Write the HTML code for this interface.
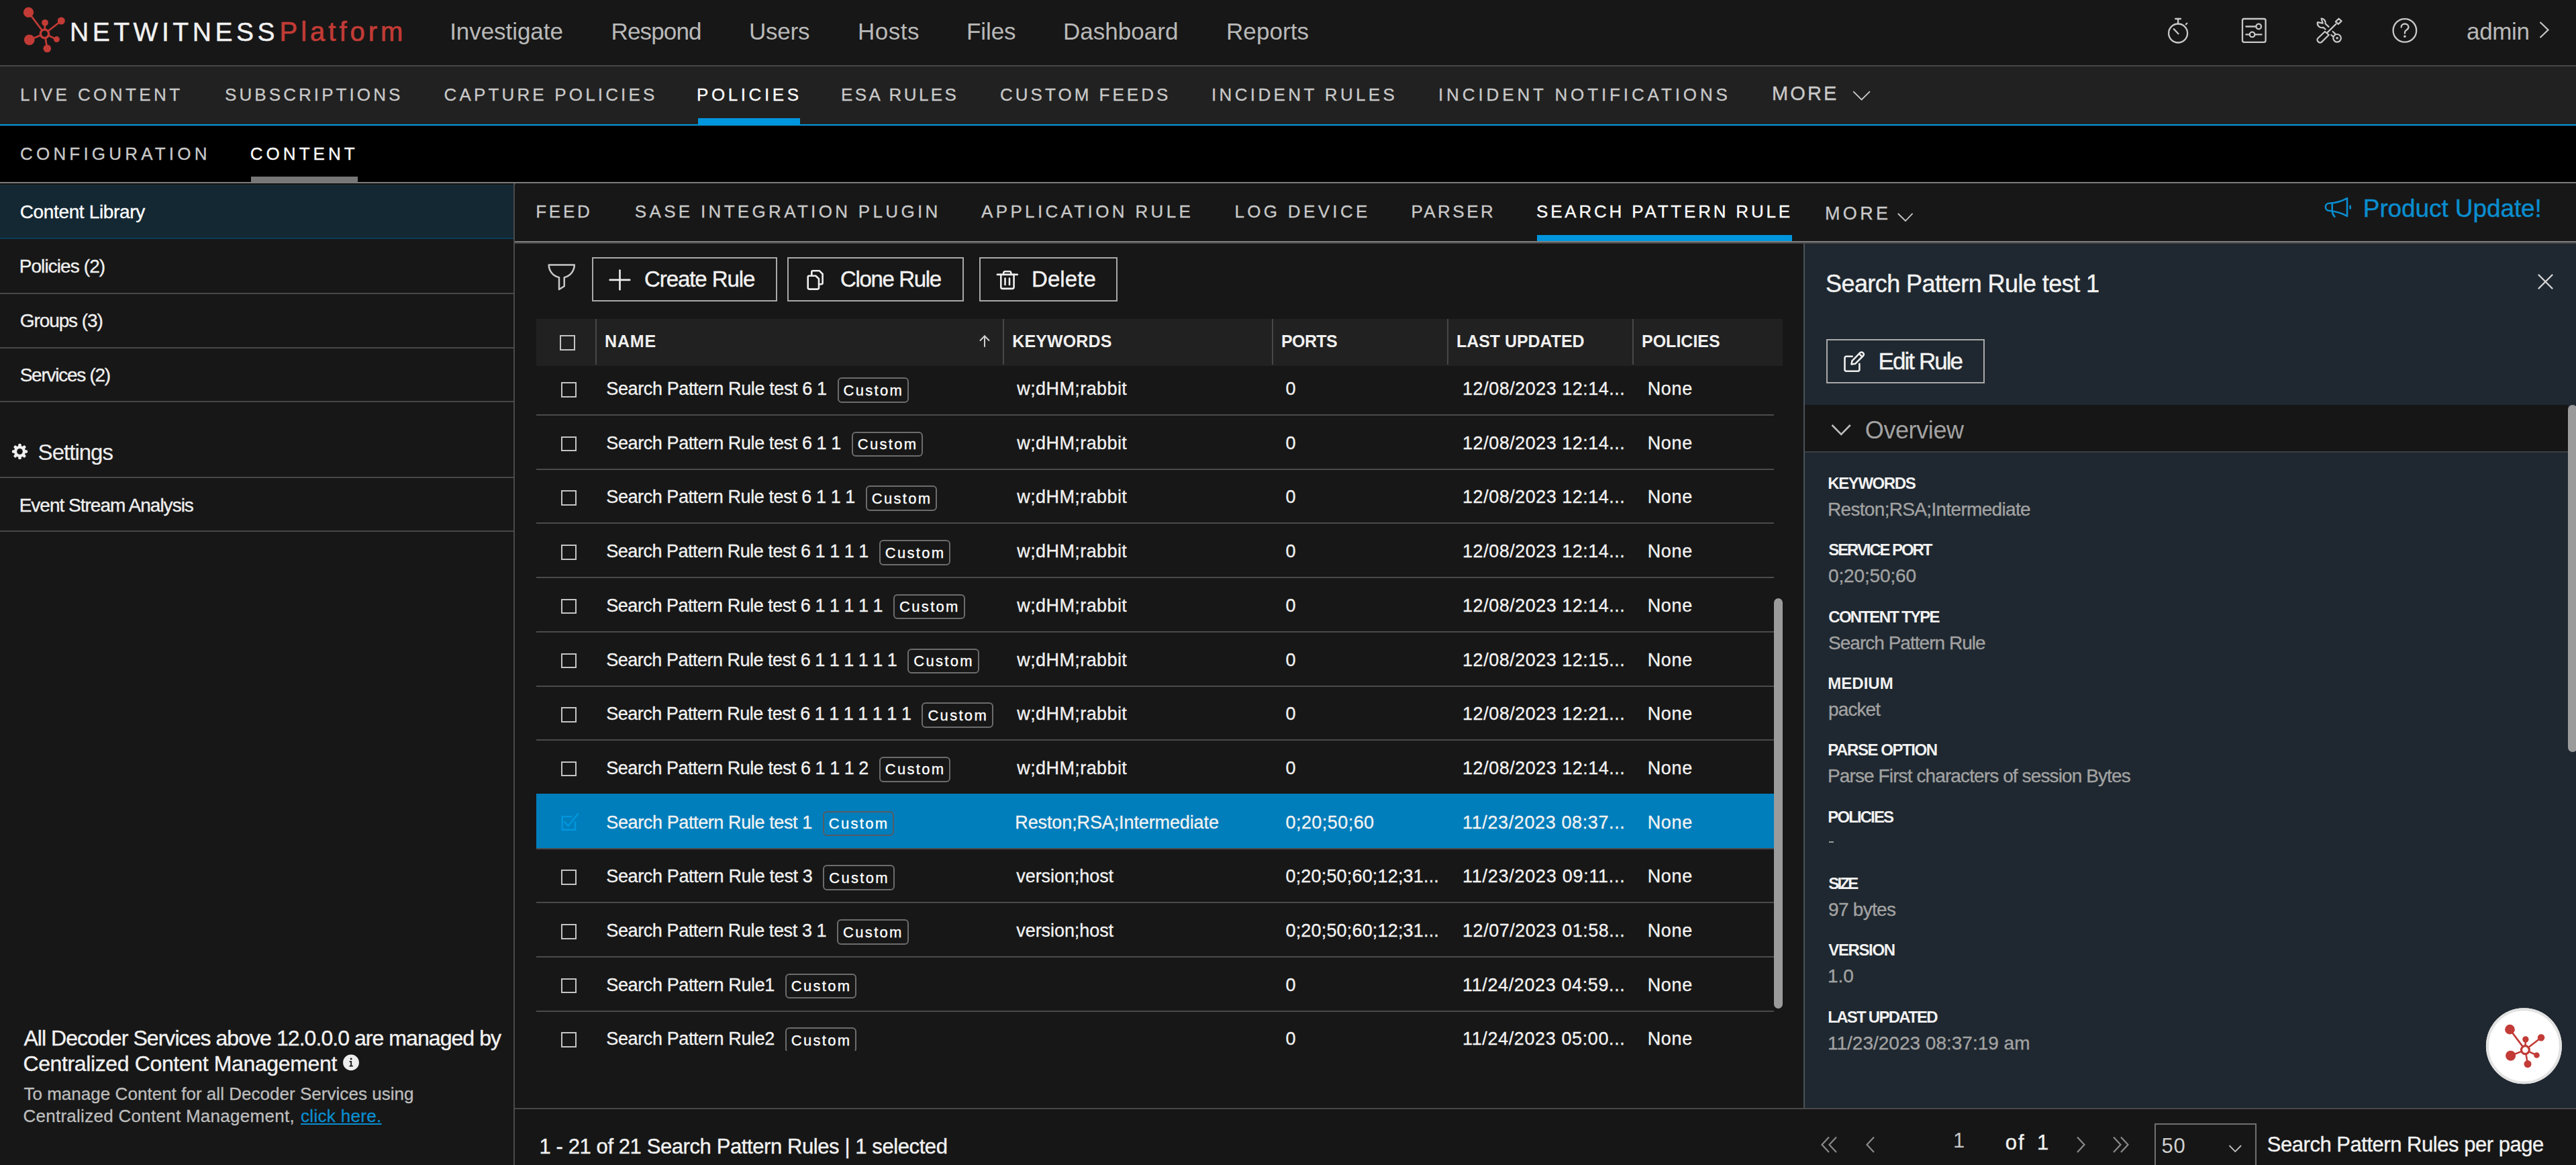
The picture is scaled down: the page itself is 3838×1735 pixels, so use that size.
<!DOCTYPE html>
<html><head><meta charset="utf-8"><title>NetWitness Platform</title>
<style>
html,body{margin:0;padding:0;width:3838px;height:1735px;overflow:hidden;background:#171717;}
body{position:relative;font-family:"Liberation Sans",sans-serif;}
.a{position:absolute;box-sizing:border-box;}
.t{position:absolute;white-space:nowrap;line-height:1;font-family:"Liberation Sans",sans-serif;}
svg.a{overflow:visible;}
</style></head><body>
<div class="a" style="left:0px;top:0px;width:3838px;height:97px;background:#171717;"></div>
<div class="a" style="left:0px;top:97px;width:3838px;height:2px;background:#474747;"></div>
<svg class="a" style="left:0px;top:0px;" width="110" height="97" viewBox="0 0 110 97"><line x1="66.5" y1="50.3" x2="42.50" y2="18.40" stroke="#c23b36" stroke-width="2.70"/><line x1="66.5" y1="50.3" x2="91.30" y2="31.00" stroke="#c23b36" stroke-width="2.70"/><line x1="66.5" y1="50.3" x2="67.00" y2="33.80" stroke="#c23b36" stroke-width="2.70"/><line x1="66.5" y1="50.3" x2="43.70" y2="59.30" stroke="#c23b36" stroke-width="2.70"/><line x1="66.5" y1="50.3" x2="84.40" y2="58.60" stroke="#c23b36" stroke-width="2.70"/><line x1="66.5" y1="50.3" x2="70.30" y2="72.30" stroke="#c23b36" stroke-width="2.70"/><circle cx="42.50" cy="18.40" r="7.70" fill="#c23b36"/><circle cx="91.30" cy="31.00" r="5.50" fill="#c23b36"/><circle cx="67.00" cy="33.80" r="4.90" fill="#c23b36"/><circle cx="43.70" cy="59.30" r="7.90" fill="#c23b36"/><circle cx="84.40" cy="58.60" r="4.50" fill="#c23b36"/><circle cx="70.30" cy="72.30" r="5.80" fill="#c23b36"/><circle cx="66.5" cy="50.3" r="6.20" fill="#171717" stroke="#c23b36" stroke-width="3.40"/></svg>
<div class="t" style="left:104.00px;top:28px;font-size:39px;color:#f2f2f2;letter-spacing:5.538px;-webkit-text-stroke:0.47px #f2f2f2;">NETWITNESS</div>
<div class="t" style="left:416.60px;top:27px;font-size:40px;color:#c23b36;letter-spacing:4.971px;-webkit-text-stroke:0.7px #c23b36;">Platform</div>
<div class="t" style="left:670.20px;top:29px;font-size:35px;color:#b9b9b9;letter-spacing:-0.061px;">Investigate</div>
<div class="t" style="left:910.50px;top:29px;font-size:35px;color:#b9b9b9;letter-spacing:-0.856px;">Respond</div>
<div class="t" style="left:1116.00px;top:29px;font-size:35px;color:#b9b9b9;letter-spacing:-0.224px;">Users</div>
<div class="t" style="left:1278.00px;top:29px;font-size:35px;color:#b9b9b9;letter-spacing:0.509px;">Hosts</div>
<div class="t" style="left:1440.00px;top:29px;font-size:35px;color:#b9b9b9;letter-spacing:-0.099px;">Files</div>
<div class="t" style="left:1584.00px;top:29px;font-size:35px;color:#b9b9b9;letter-spacing:0.030px;">Dashboard</div>
<div class="t" style="left:1827.00px;top:29px;font-size:35px;color:#b9b9b9;letter-spacing:0.075px;">Reports</div>
<svg class="a" style="left:3220px;top:20px;" width="60" height="50" viewBox="0 0 60 50"><g fill="none" stroke="#c8c8c8" stroke-width="2.3" stroke-linecap="round"><circle cx="25.1" cy="29.5" r="14"/><line x1="21.2" y1="8" x2="29" y2="8"/><line x1="25.1" y1="8" x2="25.1" y2="15.5"/><line x1="36.9" y1="16.2" x2="38.3" y2="14.8"/><line x1="18.8" y1="23.3" x2="25.5" y2="30.3"/></g></svg>
<svg class="a" style="left:3330px;top:20px;" width="60" height="50" viewBox="0 0 60 50"><g fill="none" stroke="#c8c8c8" stroke-width="2.3" stroke-linecap="round"><rect x="11" y="8" width="34.6" height="34.8" rx="2.5"/><line x1="16.4" y1="19.5" x2="31.4" y2="19.5"/><circle cx="35.2" cy="19.5" r="3.8"/><line x1="16.4" y1="31.4" x2="21.7" y2="31.4"/><line x1="29.5" y1="31.4" x2="39.5" y2="31.4"/><circle cx="25.6" cy="31.4" r="3.8"/></g></svg>
<svg class="a" style="left:3445px;top:20px;" width="60" height="50" viewBox="0 0 60 50"><g fill="none" stroke="#c8c8c8" stroke-width="2.2" stroke-linecap="round" stroke-linejoin="round"><path d="M18.9 27 L24.8 32 L14 42.6 A3.2 3.2 0 0 1 9.5 42.6 L8.4 41.5 A3.2 3.2 0 0 1 8.4 37 Z"/><line x1="22.3" y1="28.6" x2="35.3" y2="15.9"/><path d="M34.9 12.4 L39.6 7.7 L43.6 11.4 L38.8 15.9 Z"/><path d="M24.5 19.9 L19.6 15.2 A6.4 6.4 0 0 0 13.6 7.5 L15.7 14.7 L8 13.2 A6.4 6.4 0 0 0 16.4 20.8 L19.6 23.5"/><circle cx="37.1" cy="36.8" r="5.8"/><line x1="30.6" y1="27" x2="34.3" y2="30.4"/><line x1="28.3" y1="32" x2="31.4" y2="34.6"/></g><circle cx="37.1" cy="36.8" r="1.8" fill="#c8c8c8"/></svg>
<svg class="a" style="left:3555px;top:20px;" width="60" height="50" viewBox="0 0 60 50"><g fill="none" stroke="#c8c8c8" stroke-width="2.3" stroke-linecap="round"><circle cx="27.9" cy="25.4" r="17.3"/><path d="M22.6 20.5 C22.6 17.5 25 15.5 27.9 15.5 C31 15.5 33.5 17.5 33.5 20.3 C33.5 23.5 30.5 24.5 28.8 26 C28 26.8 27.9 27.8 27.9 29.7"/></g><circle cx="27.9" cy="34.3" r="1.8" fill="#c8c8c8"/></svg>
<div class="t" style="left:3675.00px;top:29px;font-size:35px;color:#b9b9b9;letter-spacing:-0.340px;">admin</div>
<svg class="a" style="left:3780px;top:28px;" width="24" height="32" viewBox="0 0 24 32"><polyline points="4.5,5 16.5,16.5 4.5,28" fill="none" stroke="#c4c4c4" stroke-width="2.3"/></svg>
<div class="a" style="left:0px;top:99px;width:3838px;height:86px;background:#212121;"></div>
<div class="a" style="left:0px;top:185px;width:3838px;height:2px;background:#0096dd;"></div>
<div class="t" style="left:30.10px;top:128px;font-size:26px;color:#c9c9c9;letter-spacing:4.439px;-webkit-text-stroke:0.31px #c9c9c9;">LIVE CONTENT</div>
<div class="t" style="left:335.00px;top:128px;font-size:26px;color:#c9c9c9;letter-spacing:4.081px;-webkit-text-stroke:0.31px #c9c9c9;">SUBSCRIPTIONS</div>
<div class="t" style="left:661.50px;top:128px;font-size:26px;color:#c9c9c9;letter-spacing:4.163px;-webkit-text-stroke:0.31px #c9c9c9;">CAPTURE POLICIES</div>
<div class="t" style="left:1038.00px;top:128px;font-size:26px;color:#ffffff;letter-spacing:4.587px;-webkit-text-stroke:0.31px #ffffff;">POLICIES</div>
<div class="t" style="left:1253.00px;top:128px;font-size:26px;color:#c9c9c9;letter-spacing:3.425px;-webkit-text-stroke:0.31px #c9c9c9;">ESA RULES</div>
<div class="t" style="left:1490.00px;top:128px;font-size:26px;color:#c9c9c9;letter-spacing:4.022px;-webkit-text-stroke:0.31px #c9c9c9;">CUSTOM FEEDS</div>
<div class="t" style="left:1805.00px;top:128px;font-size:26px;color:#c9c9c9;letter-spacing:4.357px;-webkit-text-stroke:0.31px #c9c9c9;">INCIDENT RULES</div>
<div class="t" style="left:2143.00px;top:128px;font-size:26px;color:#c9c9c9;letter-spacing:4.881px;-webkit-text-stroke:0.31px #c9c9c9;">INCIDENT NOTIFICATIONS</div>
<div class="a" style="left:1040px;top:176px;width:152px;height:10px;background:#0096dd;"></div>
<div class="t" style="left:2639.90px;top:125px;font-size:29px;color:#c9c9c9;letter-spacing:3.148px;-webkit-text-stroke:0.35px #c9c9c9;">MORE</div>
<svg class="a" style="left:2755px;top:130px;" width="36" height="24" viewBox="0 0 36 24"><polyline points="6.2,6.2 18.6,18.4 31,6.2" fill="none" stroke="#c9c9c9" stroke-width="1.8"/></svg>
<div class="a" style="left:0px;top:187.5px;width:3838px;height:84px;background:#000000;"></div>
<div class="t" style="left:30.00px;top:215.6px;font-size:26px;color:#c9c9c9;letter-spacing:5.192px;-webkit-text-stroke:0.31px #c9c9c9;">CONFIGURATION</div>
<div class="t" style="left:372.80px;top:215.6px;font-size:26px;color:#ffffff;letter-spacing:5.021px;-webkit-text-stroke:0.31px #ffffff;">CONTENT</div>
<div class="a" style="left:374px;top:263px;width:159px;height:8px;background:#777777;"></div>
<div class="a" style="left:0px;top:271px;width:3838px;height:2px;background:#7c7c7c;"></div>
<div class="a" style="left:0px;top:273px;width:3838px;height:2px;background:#444444;"></div>
<div class="a" style="left:0px;top:273px;width:766px;height:1462px;background:#171717;"></div>
<div class="a" style="left:765px;top:273px;width:2px;height:1462px;background:#4a4a4a;"></div>
<div class="a" style="left:0px;top:275px;width:765px;height:80px;background:#142833;"></div>
<div class="a" style="left:0px;top:354px;width:765px;height:2px;background:#0b3d57;"></div>
<div class="a" style="left:0px;top:435.5px;width:765px;height:2px;background:#474747;"></div>
<div class="a" style="left:0px;top:516.7px;width:765px;height:2px;background:#474747;"></div>
<div class="a" style="left:0px;top:597.1px;width:765px;height:2px;background:#474747;"></div>
<div class="a" style="left:0px;top:710.2px;width:765px;height:2px;background:#474747;"></div>
<div class="a" style="left:0px;top:789.6px;width:765px;height:2px;background:#474747;"></div>
<div class="t" style="left:29.70px;top:302px;font-size:28px;color:#ffffff;letter-spacing:-0.352px;-webkit-text-stroke:0.34px #ffffff;">Content Library</div>
<div class="t" style="left:28.70px;top:383.3px;font-size:28px;color:#f0f0f0;letter-spacing:-0.914px;-webkit-text-stroke:0.34px #f0f0f0;">Policies (2)</div>
<div class="t" style="left:29.70px;top:464px;font-size:28px;color:#f0f0f0;letter-spacing:-1.077px;-webkit-text-stroke:0.34px #f0f0f0;">Groups (3)</div>
<div class="t" style="left:29.70px;top:545.3px;font-size:28px;color:#f0f0f0;letter-spacing:-1.267px;-webkit-text-stroke:0.34px #f0f0f0;">Services (2)</div>
<div class="t" style="left:56.60px;top:657px;font-size:33px;color:#ededed;letter-spacing:-0.977px;-webkit-text-stroke:0.15px #ededed;">Settings</div>
<svg class="a" style="left:10px;top:655px;" width="40" height="36" viewBox="0 0 40 36"><circle cx="19.5" cy="17.4" r="8.6" fill="#f0f0f0"/><rect x="17.25" y="5.8" width="4.5" height="6" rx="1.6" fill="#f0f0f0" transform="rotate(0 19.5 17.4)"/><rect x="17.25" y="5.8" width="4.5" height="6" rx="1.6" fill="#f0f0f0" transform="rotate(45 19.5 17.4)"/><rect x="17.25" y="5.8" width="4.5" height="6" rx="1.6" fill="#f0f0f0" transform="rotate(90 19.5 17.4)"/><rect x="17.25" y="5.8" width="4.5" height="6" rx="1.6" fill="#f0f0f0" transform="rotate(135 19.5 17.4)"/><rect x="17.25" y="5.8" width="4.5" height="6" rx="1.6" fill="#f0f0f0" transform="rotate(180 19.5 17.4)"/><rect x="17.25" y="5.8" width="4.5" height="6" rx="1.6" fill="#f0f0f0" transform="rotate(225 19.5 17.4)"/><rect x="17.25" y="5.8" width="4.5" height="6" rx="1.6" fill="#f0f0f0" transform="rotate(270 19.5 17.4)"/><rect x="17.25" y="5.8" width="4.5" height="6" rx="1.6" fill="#f0f0f0" transform="rotate(315 19.5 17.4)"/><circle cx="19.5" cy="17.4" r="4.3" fill="#171717"/></svg>
<div class="t" style="left:28.70px;top:739px;font-size:28px;color:#f0f0f0;letter-spacing:-0.998px;-webkit-text-stroke:0.34px #f0f0f0;">Event Stream Analysis</div>
<div class="t" style="left:35.40px;top:1529.6px;font-size:32px;color:#f2f2f2;letter-spacing:-0.942px;-webkit-text-stroke:0.38px #f2f2f2;">All Decoder Services above 12.0.0.0 are managed by</div>
<div class="t" style="left:34.40px;top:1567.5px;font-size:32px;color:#f2f2f2;letter-spacing:-0.366px;-webkit-text-stroke:0.38px #f2f2f2;">Centralized Content Management</div>
<svg class="a" style="left:505px;top:1565px;" width="36" height="36" viewBox="0 0 36 36"><circle cx="18" cy="17.4" r="11.9" fill="#ededed"/><rect x="17.2" y="15.4" width="1.9" height="7.4" fill="#171717"/><rect x="15.6" y="15.2" width="3.4" height="1.7" fill="#171717"/><rect x="15.6" y="21.7" width="5.2" height="1.8" fill="#171717"/><circle cx="18.1" cy="12" r="1.45" fill="#171717"/></svg>
<div class="t" style="left:35.40px;top:1615.8px;font-size:26px;color:#bdbdbd;letter-spacing:0.033px;-webkit-text-stroke:0.31px #bdbdbd;">To manage Content for all Decoder Services using</div>
<div class="t" style="left:34.40px;top:1649px;font-size:26px;color:#bdbdbd;letter-spacing:0.274px;-webkit-text-stroke:0.31px #bdbdbd;">Centralized Content Management,</div>
<div class="t" style="left:448.00px;top:1649px;font-size:26px;color:#0a8dcf;letter-spacing:0.319px;text-decoration:underline;text-underline-offset:2px;text-decoration-thickness:2px;-webkit-text-stroke:0.31px #0a8dcf;">click here.</div>
<div class="a" style="left:768px;top:273px;width:3070px;height:87px;background:#171717;"></div>
<div class="a" style="left:767px;top:359px;width:3071px;height:2px;background:#7e7e7e;"></div>
<div class="a" style="left:767px;top:361px;width:3071px;height:2px;background:#444444;"></div>
<div class="t" style="left:798.20px;top:302px;font-size:26px;color:#c9c9c9;letter-spacing:3.745px;-webkit-text-stroke:0.31px #c9c9c9;">FEED</div>
<div class="t" style="left:945.80px;top:302px;font-size:26px;color:#c9c9c9;letter-spacing:4.324px;-webkit-text-stroke:0.31px #c9c9c9;">SASE INTEGRATION PLUGIN</div>
<div class="t" style="left:1462.00px;top:302px;font-size:26px;color:#c9c9c9;letter-spacing:4.351px;-webkit-text-stroke:0.31px #c9c9c9;">APPLICATION RULE</div>
<div class="t" style="left:1839.40px;top:302px;font-size:26px;color:#c9c9c9;letter-spacing:4.334px;-webkit-text-stroke:0.31px #c9c9c9;">LOG DEVICE</div>
<div class="t" style="left:2102.40px;top:302px;font-size:26px;color:#c9c9c9;letter-spacing:3.477px;-webkit-text-stroke:0.31px #c9c9c9;">PARSER</div>
<div class="t" style="left:2289.00px;top:302px;font-size:26px;color:#ffffff;letter-spacing:3.806px;-webkit-text-stroke:0.31px #ffffff;">SEARCH PATTERN RULE</div>
<div class="t" style="left:2719.00px;top:305px;font-size:27px;color:#c9c9c9;letter-spacing:4.336px;-webkit-text-stroke:0.32px #c9c9c9;">MORE</div>
<svg class="a" style="left:2822px;top:310px;" width="34" height="24" viewBox="0 0 34 24"><polyline points="5.8,8 17,19 27.6,7.8" fill="none" stroke="#c9c9c9" stroke-width="1.8"/></svg>
<div class="a" style="left:2290px;top:350px;width:380px;height:9px;background:#0096dd;"></div>
<svg class="a" style="left:3455px;top:285px;" width="60" height="50" viewBox="0 0 60 50"><g fill="none" stroke="#0a8dcf" stroke-width="2.6" stroke-linejoin="round" stroke-linecap="round"><path d="M15 17.8 Q31 16.8 42 10.1 L42 36.9 Q31 30.3 15 28.7 A5.1 5.45 0 0 1 15 17.8Z"/><line x1="19.7" y1="17.6" x2="19.7" y2="28.8"/><path d="M19.7 28.8 Q20.2 34.5 23.4 37.7"/><line x1="46.6" y1="21.7" x2="46.6" y2="25.5"/></g></svg>
<div class="t" style="left:3520.80px;top:292px;font-size:37px;color:#0a8dcf;letter-spacing:-0.093px;-webkit-text-stroke:0.44px #0a8dcf;">Product Update!</div>
<svg class="a" style="left:805px;top:375px;" width="60" height="60" viewBox="0 0 60 60"><path d="M12.7 19.6 L50.8 19.6 C50.8 28 45 36 35.7 38.1 L35.7 51.3 L28 56 L28 38.1 C18.5 36 12.7 28 12.7 19.6Z" fill="none" stroke="#c8c8c8" stroke-width="2.5" stroke-linejoin="round"/></svg>
<div class="a" style="left:882px;top:382.5px;width:276px;height:66px;border:2px solid #a9a9a9;background:none;"></div>
<svg class="a" style="left:900px;top:395px;" width="48" height="45" viewBox="0 0 48 45"><g stroke="#eeeeee" stroke-width="2.6" stroke-linecap="round"><line x1="8.7" y1="21.9" x2="38.2" y2="21.9"/><line x1="23.5" y1="7.5" x2="23.5" y2="36.3"/></g></svg>
<div class="t" style="left:960.00px;top:399px;font-size:33px;color:#f2f2f2;letter-spacing:-1.073px;-webkit-text-stroke:0.40px #f2f2f2;">Create Rule</div>
<div class="a" style="left:1173px;top:382.5px;width:263px;height:66px;border:2px solid #a9a9a9;background:none;"></div>
<svg class="a" style="left:1190px;top:390px;" width="50" height="50" viewBox="0 0 50 50"><g fill="none" stroke="#eeeeee" stroke-width="2.6" stroke-linejoin="round"><path d="M19.3 20.8 V15.3 a2 2 0 0 1 2-2 H30.9 L35.6 18 V31.3 a2 2 0 0 1 -2 2 H30"/><path d="M15.7 20.8 H25.3 L30 25.3 V38.6 a2 2 0 0 1 -2 2 H15.7 a2 2 0 0 1 -2-2 V22.8 a2 2 0 0 1 2-2Z"/></g></svg>
<div class="t" style="left:1252.00px;top:399px;font-size:33px;color:#f2f2f2;letter-spacing:-1.345px;-webkit-text-stroke:0.40px #f2f2f2;">Clone Rule</div>
<div class="a" style="left:1459px;top:382.5px;width:206px;height:66px;border:2px solid #a9a9a9;background:none;"></div>
<svg class="a" style="left:1475px;top:390px;" width="50" height="50" viewBox="0 0 50 50"><g fill="none" stroke="#eeeeee" stroke-width="2.6" stroke-linecap="round" stroke-linejoin="round"><line x1="10.9" y1="18.9" x2="40.8" y2="18.9"/><path d="M20.2 18.9 V16.4 a2.2 2.2 0 0 1 2.2-2.2 H29.1 a2.2 2.2 0 0 1 2.2 2.2 V18.9"/><path d="M16.3 18.9 V37.4 a2.5 2.5 0 0 0 2.5 2.5 H33.1 a2.5 2.5 0 0 0 2.5-2.5 V18.9"/><line x1="22.5" y1="24.5" x2="22.5" y2="33.9"/><line x1="29" y1="24.5" x2="29" y2="33.9"/></g></svg>
<div class="t" style="left:1537.00px;top:399px;font-size:33px;color:#f2f2f2;letter-spacing:0.092px;-webkit-text-stroke:0.40px #f2f2f2;">Delete</div>
<div class="a" style="left:799px;top:475px;width:1857px;height:70px;background:#212121;"></div>
<div class="a" style="left:887px;top:475px;width:2px;height:67.5px;background:#474747;"></div>
<div class="a" style="left:1494px;top:475px;width:2px;height:67.5px;background:#474747;"></div>
<div class="a" style="left:1895px;top:475px;width:2px;height:67.5px;background:#474747;"></div>
<div class="a" style="left:2156px;top:475px;width:2px;height:67.5px;background:#474747;"></div>
<div class="a" style="left:2432px;top:475px;width:2px;height:67.5px;background:#474747;"></div>
<div class="a" style="left:834px;top:499px;width:22.5px;height:22.5px;border:2.8px solid #c4c4c4;"></div>
<div class="t" style="left:901.00px;top:496px;font-size:25px;color:#f0f0f0;font-weight:700;letter-spacing:0.822px;">NAME</div>
<svg class="a" style="left:1452px;top:494px;" width="30" height="28" viewBox="0 0 30 28"><g stroke="#d0d0d0" stroke-width="2" fill="none" stroke-linecap="round"><line x1="15" y1="6.5" x2="15" y2="22"/><polyline points="8.5,13 15,6.5 21.5,13"/></g></svg>
<div class="t" style="left:1508.30px;top:496px;font-size:25px;color:#f0f0f0;font-weight:700;letter-spacing:0.121px;">KEYWORDS</div>
<div class="t" style="left:1909.00px;top:496px;font-size:25px;color:#f0f0f0;font-weight:700;letter-spacing:-0.611px;">PORTS</div>
<div class="t" style="left:2170.00px;top:496px;font-size:25px;color:#f0f0f0;font-weight:700;letter-spacing:-0.059px;">LAST UPDATED</div>
<div class="t" style="left:2446.00px;top:496px;font-size:25px;color:#f0f0f0;font-weight:700;">POLICIES</div>
<div class="a" style="left:0;top:545px;width:3838px;height:1020px;overflow:hidden;">
<div class="a" style="left:0;top:-545px;width:3838px;height:1735px;">
<div class="a" style="left:799px;top:617px;width:1844px;height:2px;background:#4a4a4a;"></div>
<div class="a" style="left:836px;top:569px;width:22.5px;height:22.5px;border:2.8px solid #c4c4c4;"></div>
<div class="t" style="left:903.30px;top:566px;font-size:27px;color:#f2f2f2;letter-spacing:-0.388px;-webkit-text-stroke:0.32px #f2f2f2;">Search Pattern Rule test 6 1</div>
<div class="a" style="left:1247.5px;top:562px;width:106.5px;height:37.7px;border:2px solid #6c6c6c;border-radius:6px;"></div>
<div class="t" style="left:1256.50px;top:570.5px;font-size:22px;color:#ffffff;letter-spacing:2.306px;-webkit-text-stroke:0.35px #ffffff;">Custom</div>
<div class="t" style="left:1515.30px;top:566px;font-size:27px;color:#f2f2f2;letter-spacing:0.405px;-webkit-text-stroke:0.32px #f2f2f2;">w;dHM;rabbit</div>
<div class="t" style="left:1915.50px;top:566px;font-size:27px;color:#f2f2f2;-webkit-text-stroke:0.32px #f2f2f2;">0</div>
<div class="t" style="left:2179.10px;top:566px;font-size:27px;color:#f2f2f2;letter-spacing:0.500px;-webkit-text-stroke:0.32px #f2f2f2;">12/08/2023 12:14...</div>
<div class="t" style="left:2454.70px;top:566px;font-size:27px;color:#f2f2f2;letter-spacing:0.656px;-webkit-text-stroke:0.32px #f2f2f2;">None</div>
<div class="a" style="left:799px;top:697.7px;width:1844px;height:2px;background:#4a4a4a;"></div>
<div class="a" style="left:836px;top:649.7px;width:22.5px;height:22.5px;border:2.8px solid #c4c4c4;"></div>
<div class="t" style="left:903.30px;top:646.7px;font-size:27px;color:#f2f2f2;letter-spacing:-0.403px;-webkit-text-stroke:0.32px #f2f2f2;">Search Pattern Rule test 6 1 1</div>
<div class="a" style="left:1268.8px;top:642.7px;width:106.5px;height:37.7px;border:2px solid #6c6c6c;border-radius:6px;"></div>
<div class="t" style="left:1277.80px;top:651.2px;font-size:22px;color:#ffffff;letter-spacing:2.306px;-webkit-text-stroke:0.35px #ffffff;">Custom</div>
<div class="t" style="left:1515.30px;top:646.7px;font-size:27px;color:#f2f2f2;letter-spacing:0.405px;-webkit-text-stroke:0.32px #f2f2f2;">w;dHM;rabbit</div>
<div class="t" style="left:1915.50px;top:646.7px;font-size:27px;color:#f2f2f2;-webkit-text-stroke:0.32px #f2f2f2;">0</div>
<div class="t" style="left:2179.10px;top:646.7px;font-size:27px;color:#f2f2f2;letter-spacing:0.500px;-webkit-text-stroke:0.32px #f2f2f2;">12/08/2023 12:14...</div>
<div class="t" style="left:2454.70px;top:646.7px;font-size:27px;color:#f2f2f2;letter-spacing:0.656px;-webkit-text-stroke:0.32px #f2f2f2;">None</div>
<div class="a" style="left:799px;top:778.4px;width:1844px;height:2px;background:#4a4a4a;"></div>
<div class="a" style="left:836px;top:730.4px;width:22.5px;height:22.5px;border:2.8px solid #c4c4c4;"></div>
<div class="t" style="left:903.30px;top:727.4px;font-size:27px;color:#f2f2f2;letter-spacing:-0.426px;-webkit-text-stroke:0.32px #f2f2f2;">Search Pattern Rule test 6 1 1 1</div>
<div class="a" style="left:1289.8px;top:723.4px;width:106.5px;height:37.7px;border:2px solid #6c6c6c;border-radius:6px;"></div>
<div class="t" style="left:1298.80px;top:731.9px;font-size:22px;color:#ffffff;letter-spacing:2.306px;-webkit-text-stroke:0.35px #ffffff;">Custom</div>
<div class="t" style="left:1515.30px;top:727.4px;font-size:27px;color:#f2f2f2;letter-spacing:0.405px;-webkit-text-stroke:0.32px #f2f2f2;">w;dHM;rabbit</div>
<div class="t" style="left:1915.50px;top:727.4px;font-size:27px;color:#f2f2f2;-webkit-text-stroke:0.32px #f2f2f2;">0</div>
<div class="t" style="left:2179.10px;top:727.4px;font-size:27px;color:#f2f2f2;letter-spacing:0.500px;-webkit-text-stroke:0.32px #f2f2f2;">12/08/2023 12:14...</div>
<div class="t" style="left:2454.70px;top:727.4px;font-size:27px;color:#f2f2f2;letter-spacing:0.656px;-webkit-text-stroke:0.32px #f2f2f2;">None</div>
<div class="a" style="left:799px;top:859.1px;width:1844px;height:2px;background:#4a4a4a;"></div>
<div class="a" style="left:836px;top:811.1px;width:22.5px;height:22.5px;border:2.8px solid #c4c4c4;"></div>
<div class="t" style="left:903.30px;top:808.1px;font-size:27px;color:#f2f2f2;letter-spacing:-0.476px;-webkit-text-stroke:0.32px #f2f2f2;">Search Pattern Rule test 6 1 1 1 1</div>
<div class="a" style="left:1309.8px;top:804.1px;width:106.5px;height:37.7px;border:2px solid #6c6c6c;border-radius:6px;"></div>
<div class="t" style="left:1318.80px;top:812.6px;font-size:22px;color:#ffffff;letter-spacing:2.306px;-webkit-text-stroke:0.35px #ffffff;">Custom</div>
<div class="t" style="left:1515.30px;top:808.1px;font-size:27px;color:#f2f2f2;letter-spacing:0.405px;-webkit-text-stroke:0.32px #f2f2f2;">w;dHM;rabbit</div>
<div class="t" style="left:1915.50px;top:808.1px;font-size:27px;color:#f2f2f2;-webkit-text-stroke:0.32px #f2f2f2;">0</div>
<div class="t" style="left:2179.10px;top:808.1px;font-size:27px;color:#f2f2f2;letter-spacing:0.500px;-webkit-text-stroke:0.32px #f2f2f2;">12/08/2023 12:14...</div>
<div class="t" style="left:2454.70px;top:808.1px;font-size:27px;color:#f2f2f2;letter-spacing:0.656px;-webkit-text-stroke:0.32px #f2f2f2;">None</div>
<div class="a" style="left:799px;top:939.8px;width:1844px;height:2px;background:#4a4a4a;"></div>
<div class="a" style="left:836px;top:891.8px;width:22.5px;height:22.5px;border:2.8px solid #c4c4c4;"></div>
<div class="t" style="left:903.30px;top:888.8px;font-size:27px;color:#f2f2f2;letter-spacing:-0.484px;-webkit-text-stroke:0.32px #f2f2f2;">Search Pattern Rule test 6 1 1 1 1 1</div>
<div class="a" style="left:1331.1px;top:884.8px;width:106.5px;height:37.7px;border:2px solid #6c6c6c;border-radius:6px;"></div>
<div class="t" style="left:1340.10px;top:893.3px;font-size:22px;color:#ffffff;letter-spacing:2.306px;-webkit-text-stroke:0.35px #ffffff;">Custom</div>
<div class="t" style="left:1515.30px;top:888.8px;font-size:27px;color:#f2f2f2;letter-spacing:0.405px;-webkit-text-stroke:0.32px #f2f2f2;">w;dHM;rabbit</div>
<div class="t" style="left:1915.50px;top:888.8px;font-size:27px;color:#f2f2f2;-webkit-text-stroke:0.32px #f2f2f2;">0</div>
<div class="t" style="left:2179.10px;top:888.8px;font-size:27px;color:#f2f2f2;letter-spacing:0.500px;-webkit-text-stroke:0.32px #f2f2f2;">12/08/2023 12:14...</div>
<div class="t" style="left:2454.70px;top:888.8px;font-size:27px;color:#f2f2f2;letter-spacing:0.656px;-webkit-text-stroke:0.32px #f2f2f2;">None</div>
<div class="a" style="left:799px;top:1020.5px;width:1844px;height:2px;background:#4a4a4a;"></div>
<div class="a" style="left:836px;top:972.5px;width:22.5px;height:22.5px;border:2.8px solid #c4c4c4;"></div>
<div class="t" style="left:903.30px;top:969.5px;font-size:27px;color:#f2f2f2;letter-spacing:-0.493px;-webkit-text-stroke:0.32px #f2f2f2;">Search Pattern Rule test 6 1 1 1 1 1 1</div>
<div class="a" style="left:1352.3px;top:965.5px;width:106.5px;height:37.7px;border:2px solid #6c6c6c;border-radius:6px;"></div>
<div class="t" style="left:1361.30px;top:974px;font-size:22px;color:#ffffff;letter-spacing:2.306px;-webkit-text-stroke:0.35px #ffffff;">Custom</div>
<div class="t" style="left:1515.30px;top:969.5px;font-size:27px;color:#f2f2f2;letter-spacing:0.405px;-webkit-text-stroke:0.32px #f2f2f2;">w;dHM;rabbit</div>
<div class="t" style="left:1915.50px;top:969.5px;font-size:27px;color:#f2f2f2;-webkit-text-stroke:0.32px #f2f2f2;">0</div>
<div class="t" style="left:2179.10px;top:969.5px;font-size:27px;color:#f2f2f2;letter-spacing:0.500px;-webkit-text-stroke:0.32px #f2f2f2;">12/08/2023 12:15...</div>
<div class="t" style="left:2454.70px;top:969.5px;font-size:27px;color:#f2f2f2;letter-spacing:0.656px;-webkit-text-stroke:0.32px #f2f2f2;">None</div>
<div class="a" style="left:799px;top:1101.2px;width:1844px;height:2px;background:#4a4a4a;"></div>
<div class="a" style="left:836px;top:1053.2px;width:22.5px;height:22.5px;border:2.8px solid #c4c4c4;"></div>
<div class="t" style="left:903.30px;top:1050.2px;font-size:27px;color:#f2f2f2;letter-spacing:-0.505px;-webkit-text-stroke:0.32px #f2f2f2;">Search Pattern Rule test 6 1 1 1 1 1 1 1</div>
<div class="a" style="left:1373.4px;top:1046.2px;width:106.5px;height:37.7px;border:2px solid #6c6c6c;border-radius:6px;"></div>
<div class="t" style="left:1382.40px;top:1054.7px;font-size:22px;color:#ffffff;letter-spacing:2.306px;-webkit-text-stroke:0.35px #ffffff;">Custom</div>
<div class="t" style="left:1515.30px;top:1050.2px;font-size:27px;color:#f2f2f2;letter-spacing:0.405px;-webkit-text-stroke:0.32px #f2f2f2;">w;dHM;rabbit</div>
<div class="t" style="left:1915.50px;top:1050.2px;font-size:27px;color:#f2f2f2;-webkit-text-stroke:0.32px #f2f2f2;">0</div>
<div class="t" style="left:2179.10px;top:1050.2px;font-size:27px;color:#f2f2f2;letter-spacing:0.500px;-webkit-text-stroke:0.32px #f2f2f2;">12/08/2023 12:21...</div>
<div class="t" style="left:2454.70px;top:1050.2px;font-size:27px;color:#f2f2f2;letter-spacing:0.656px;-webkit-text-stroke:0.32px #f2f2f2;">None</div>
<div class="a" style="left:836px;top:1133.9px;width:22.5px;height:22.5px;border:2.8px solid #c4c4c4;"></div>
<div class="t" style="left:903.30px;top:1130.9px;font-size:27px;color:#f2f2f2;letter-spacing:-0.476px;-webkit-text-stroke:0.32px #f2f2f2;">Search Pattern Rule test 6 1 1 1 2</div>
<div class="a" style="left:1309.8px;top:1126.9px;width:106.5px;height:37.7px;border:2px solid #6c6c6c;border-radius:6px;"></div>
<div class="t" style="left:1318.80px;top:1135.4px;font-size:22px;color:#ffffff;letter-spacing:2.306px;-webkit-text-stroke:0.35px #ffffff;">Custom</div>
<div class="t" style="left:1515.30px;top:1130.9px;font-size:27px;color:#f2f2f2;letter-spacing:0.405px;-webkit-text-stroke:0.32px #f2f2f2;">w;dHM;rabbit</div>
<div class="t" style="left:1915.50px;top:1130.9px;font-size:27px;color:#f2f2f2;-webkit-text-stroke:0.32px #f2f2f2;">0</div>
<div class="t" style="left:2179.10px;top:1130.9px;font-size:27px;color:#f2f2f2;letter-spacing:0.500px;-webkit-text-stroke:0.32px #f2f2f2;">12/08/2023 12:14...</div>
<div class="t" style="left:2454.70px;top:1130.9px;font-size:27px;color:#f2f2f2;letter-spacing:0.656px;-webkit-text-stroke:0.32px #f2f2f2;">None</div>
<div class="a" style="left:799px;top:1181.9px;width:1844px;height:80.7px;background:#007ebc;"></div>
<div class="a" style="left:799px;top:1262.6px;width:1844px;height:2px;background:#4a4a4a;"></div>
<svg class="a" style="left:830px;top:1206.9px;" width="40" height="40" viewBox="0 0 40 40"><g fill="none" stroke="#0096de" stroke-width="2.4"><polyline points="22.6,9.1 7.7,9.1 7.7,28.7 27.1,28.7 27.1,16.4"/><polyline points="10.8,16.9 16.7,23 31.1,5.1" stroke-linecap="round"/></g></svg>
<div class="t" style="left:903.30px;top:1211.6px;font-size:27px;color:#f2f2f2;letter-spacing:-0.386px;-webkit-text-stroke:0.32px #f2f2f2;">Search Pattern Rule test 1</div>
<div class="a" style="left:1225.8px;top:1207.6px;width:106.5px;height:37.7px;border:2px solid #555c62;border-radius:6px;"></div>
<div class="t" style="left:1234.80px;top:1216.1px;font-size:22px;color:#ffffff;letter-spacing:2.306px;-webkit-text-stroke:0.35px #ffffff;">Custom</div>
<div class="t" style="left:1512.30px;top:1211.6px;font-size:27px;color:#f2f2f2;letter-spacing:-0.115px;-webkit-text-stroke:0.32px #f2f2f2;">Reston;RSA;Intermediate</div>
<div class="t" style="left:1915.50px;top:1211.6px;font-size:27px;color:#f2f2f2;letter-spacing:0.444px;-webkit-text-stroke:0.32px #f2f2f2;">0;20;50;60</div>
<div class="t" style="left:2179.10px;top:1211.6px;font-size:27px;color:#f2f2f2;letter-spacing:0.611px;-webkit-text-stroke:0.32px #f2f2f2;">11/23/2023 08:37...</div>
<div class="t" style="left:2454.70px;top:1211.6px;font-size:27px;color:#f2f2f2;letter-spacing:0.656px;-webkit-text-stroke:0.32px #f2f2f2;">None</div>
<div class="a" style="left:799px;top:1343.3px;width:1844px;height:2px;background:#4a4a4a;"></div>
<div class="a" style="left:836px;top:1295.3px;width:22.5px;height:22.5px;border:2.8px solid #c4c4c4;"></div>
<div class="t" style="left:903.30px;top:1292.3px;font-size:27px;color:#f2f2f2;letter-spacing:-0.366px;-webkit-text-stroke:0.32px #f2f2f2;">Search Pattern Rule test 3</div>
<div class="a" style="left:1226.3px;top:1288.3px;width:106.5px;height:37.7px;border:2px solid #6c6c6c;border-radius:6px;"></div>
<div class="t" style="left:1235.30px;top:1296.8px;font-size:22px;color:#ffffff;letter-spacing:2.306px;-webkit-text-stroke:0.35px #ffffff;">Custom</div>
<div class="t" style="left:1514.30px;top:1292.3px;font-size:27px;color:#f2f2f2;letter-spacing:-0.070px;-webkit-text-stroke:0.32px #f2f2f2;">version;host</div>
<div class="t" style="left:1915.50px;top:1292.3px;font-size:27px;color:#f2f2f2;letter-spacing:0.173px;-webkit-text-stroke:0.32px #f2f2f2;">0;20;50;60;12;31...</div>
<div class="t" style="left:2179.10px;top:1292.3px;font-size:27px;color:#f2f2f2;letter-spacing:0.723px;-webkit-text-stroke:0.32px #f2f2f2;">11/23/2023 09:11...</div>
<div class="t" style="left:2454.70px;top:1292.3px;font-size:27px;color:#f2f2f2;letter-spacing:0.656px;-webkit-text-stroke:0.32px #f2f2f2;">None</div>
<div class="a" style="left:799px;top:1424px;width:1844px;height:2px;background:#4a4a4a;"></div>
<div class="a" style="left:836px;top:1376px;width:22.5px;height:22.5px;border:2.8px solid #c4c4c4;"></div>
<div class="t" style="left:903.30px;top:1373px;font-size:27px;color:#f2f2f2;letter-spacing:-0.403px;-webkit-text-stroke:0.32px #f2f2f2;">Search Pattern Rule test 3 1</div>
<div class="a" style="left:1247.1px;top:1369px;width:106.5px;height:37.7px;border:2px solid #6c6c6c;border-radius:6px;"></div>
<div class="t" style="left:1256.10px;top:1377.5px;font-size:22px;color:#ffffff;letter-spacing:2.306px;-webkit-text-stroke:0.35px #ffffff;">Custom</div>
<div class="t" style="left:1514.30px;top:1373px;font-size:27px;color:#f2f2f2;letter-spacing:-0.070px;-webkit-text-stroke:0.32px #f2f2f2;">version;host</div>
<div class="t" style="left:1915.50px;top:1373px;font-size:27px;color:#f2f2f2;letter-spacing:0.173px;-webkit-text-stroke:0.32px #f2f2f2;">0;20;50;60;12;31...</div>
<div class="t" style="left:2179.10px;top:1373px;font-size:27px;color:#f2f2f2;letter-spacing:0.500px;-webkit-text-stroke:0.32px #f2f2f2;">12/07/2023 01:58...</div>
<div class="t" style="left:2454.70px;top:1373px;font-size:27px;color:#f2f2f2;letter-spacing:0.656px;-webkit-text-stroke:0.32px #f2f2f2;">None</div>
<div class="a" style="left:799px;top:1504.7px;width:1844px;height:2px;background:#4a4a4a;"></div>
<div class="a" style="left:836px;top:1456.7px;width:22.5px;height:22.5px;border:2.8px solid #c4c4c4;"></div>
<div class="t" style="left:903.30px;top:1453.7px;font-size:27px;color:#f2f2f2;letter-spacing:-0.375px;-webkit-text-stroke:0.32px #f2f2f2;">Search Pattern Rule1</div>
<div class="a" style="left:1169.8px;top:1449.7px;width:106.5px;height:37.7px;border:2px solid #6c6c6c;border-radius:6px;"></div>
<div class="t" style="left:1178.80px;top:1458.2px;font-size:22px;color:#ffffff;letter-spacing:2.306px;-webkit-text-stroke:0.35px #ffffff;">Custom</div>
<div class="t" style="left:1915.50px;top:1453.7px;font-size:27px;color:#f2f2f2;-webkit-text-stroke:0.32px #f2f2f2;">0</div>
<div class="t" style="left:2179.10px;top:1453.7px;font-size:27px;color:#f2f2f2;letter-spacing:0.611px;-webkit-text-stroke:0.32px #f2f2f2;">11/24/2023 04:59...</div>
<div class="t" style="left:2454.70px;top:1453.7px;font-size:27px;color:#f2f2f2;letter-spacing:0.656px;-webkit-text-stroke:0.32px #f2f2f2;">None</div>
<div class="a" style="left:836px;top:1537.4px;width:22.5px;height:22.5px;border:2.8px solid #c4c4c4;"></div>
<div class="t" style="left:903.30px;top:1534.4px;font-size:27px;color:#f2f2f2;letter-spacing:-0.375px;-webkit-text-stroke:0.32px #f2f2f2;">Search Pattern Rule2</div>
<div class="a" style="left:1169.8px;top:1530.4px;width:106.5px;height:37.7px;border:2px solid #6c6c6c;border-radius:6px;"></div>
<div class="t" style="left:1178.80px;top:1538.9px;font-size:22px;color:#ffffff;letter-spacing:2.306px;-webkit-text-stroke:0.35px #ffffff;">Custom</div>
<div class="t" style="left:1915.50px;top:1534.4px;font-size:27px;color:#f2f2f2;-webkit-text-stroke:0.32px #f2f2f2;">0</div>
<div class="t" style="left:2179.10px;top:1534.4px;font-size:27px;color:#f2f2f2;letter-spacing:0.611px;-webkit-text-stroke:0.32px #f2f2f2;">11/24/2023 05:00...</div>
<div class="t" style="left:2454.70px;top:1534.4px;font-size:27px;color:#f2f2f2;letter-spacing:0.656px;-webkit-text-stroke:0.32px #f2f2f2;">None</div>
</div></div>
<div class="a" style="left:2643px;top:890.6px;width:13px;height:611.4px;background:#9b9b9b;border-radius:6.5px;"></div>
<div class="a" style="left:2689px;top:363px;width:1149px;height:1287px;background:#1f2830;"></div>
<div class="a" style="left:2687px;top:363px;width:2px;height:1287px;background:#4a5259;"></div>
<div class="t" style="left:2720.00px;top:405px;font-size:36px;color:#f2f2f2;letter-spacing:-0.568px;-webkit-text-stroke:0.43px #f2f2f2;">Search Pattern Rule test 1</div>
<svg class="a" style="left:3776px;top:403px;" width="34" height="34" viewBox="0 0 34 34"><g stroke="#d8d8d8" stroke-width="2.3" stroke-linecap="round"><line x1="6.5" y1="6.5" x2="26.5" y2="26.5"/><line x1="26.5" y1="6.5" x2="6.5" y2="26.5"/></g></svg>
<div class="a" style="left:2721px;top:504.5px;width:236px;height:66px;border:2px solid #a9a9a9;background:none;"></div>
<svg class="a" style="left:2735px;top:515px;" width="50" height="45" viewBox="0 0 50 45"><g fill="none" stroke="#eeeeee" stroke-width="2.6" stroke-linecap="round" stroke-linejoin="round"><path d="M24.7 15.8 H16 a2.5 2.5 0 0 0 -2.5 2.5 V35.2 a2.5 2.5 0 0 0 2.5 2.5 H32.9 a2.5 2.5 0 0 0 2.5-2.5 V26.7"/><path d="M23.5 27.5 L24.5 22.3 L36.6 10.2 a2.6 2.6 0 0 1 3.7 0 l0.8 0.8 a2.6 2.6 0 0 1 0 3.7 L29 26.8 Z"/><line x1="35" y1="11.8" x2="39.5" y2="16.3"/></g></svg>
<div class="t" style="left:2798.50px;top:520px;font-size:35px;color:#f2f2f2;letter-spacing:-1.931px;-webkit-text-stroke:0.42px #f2f2f2;">Edit Rule</div>
<div class="a" style="left:2689px;top:603px;width:1137px;height:70px;background:#161616;"></div>
<div class="a" style="left:2689px;top:672px;width:1137px;height:2px;background:#3a3f44;"></div>
<svg class="a" style="left:2720px;top:620px;" width="45" height="40" viewBox="0 0 45 40"><polyline points="9.5,13 23.2,27 36.8,13" fill="none" stroke="#bdbdbd" stroke-width="2.6"/></svg>
<div class="t" style="left:2778.80px;top:623.3px;font-size:36px;color:#a2a2a2;letter-spacing:-0.404px;">Overview</div>
<div class="a" style="left:3826px;top:603px;width:14px;height:517px;background:#9b9b9b;border-radius:7px;"></div>
<div class="t" style="left:2723.30px;top:708px;font-size:24px;color:#f2f2f2;font-weight:700;letter-spacing:-1.419px;">KEYWORDS</div>
<div class="t" style="left:2723.00px;top:745px;font-size:28px;color:#a2a2a2;letter-spacing:-0.678px;-webkit-text-stroke:0.34px #a2a2a2;">Reston;RSA;Intermediate</div>
<div class="t" style="left:2724.30px;top:807.35px;font-size:24px;color:#f2f2f2;font-weight:700;letter-spacing:-2.100px;">SERVICE PORT</div>
<div class="t" style="left:2724.00px;top:844.35px;font-size:28px;color:#a2a2a2;letter-spacing:-0.141px;-webkit-text-stroke:0.34px #a2a2a2;">0;20;50;60</div>
<div class="t" style="left:2724.30px;top:906.7px;font-size:24px;color:#f2f2f2;font-weight:700;letter-spacing:-1.731px;">CONTENT TYPE</div>
<div class="t" style="left:2724.00px;top:943.7px;font-size:28px;color:#a2a2a2;letter-spacing:-0.976px;-webkit-text-stroke:0.34px #a2a2a2;">Search Pattern Rule</div>
<div class="t" style="left:2723.30px;top:1006.05px;font-size:24px;color:#f2f2f2;font-weight:700;">MEDIUM</div>
<div class="t" style="left:2724.00px;top:1043.05px;font-size:28px;color:#a2a2a2;letter-spacing:-0.883px;-webkit-text-stroke:0.34px #a2a2a2;">packet</div>
<div class="t" style="left:2723.30px;top:1105.4px;font-size:24px;color:#f2f2f2;font-weight:700;letter-spacing:-1.431px;">PARSE OPTION</div>
<div class="t" style="left:2723.00px;top:1142.4px;font-size:28px;color:#a2a2a2;letter-spacing:-0.890px;-webkit-text-stroke:0.34px #a2a2a2;">Parse First characters of session Bytes</div>
<div class="t" style="left:2723.30px;top:1204.75px;font-size:24px;color:#f2f2f2;font-weight:700;letter-spacing:-1.902px;">POLICIES</div>
<div class="a" style="left:2725px;top:1253.25px;width:7px;height:2px;background:#9a9a9a;"></div>
<div class="t" style="left:2724.30px;top:1304.1px;font-size:24px;color:#f2f2f2;font-weight:700;letter-spacing:-2.779px;">SIZE</div>
<div class="t" style="left:2724.00px;top:1341.1px;font-size:28px;color:#a2a2a2;letter-spacing:-0.693px;-webkit-text-stroke:0.34px #a2a2a2;">97 bytes</div>
<div class="t" style="left:2724.30px;top:1403.45px;font-size:24px;color:#f2f2f2;font-weight:700;letter-spacing:-1.382px;">VERSION</div>
<div class="t" style="left:2723.00px;top:1440.45px;font-size:28px;color:#a2a2a2;letter-spacing:-0.076px;-webkit-text-stroke:0.34px #a2a2a2;">1.0</div>
<div class="t" style="left:2723.30px;top:1502.8px;font-size:24px;color:#f2f2f2;font-weight:700;letter-spacing:-1.756px;">LAST UPDATED</div>
<div class="t" style="left:2723.00px;top:1539.8px;font-size:28px;color:#a2a2a2;-webkit-text-stroke:0.34px #a2a2a2;">11/23/2023 08:37:19 am</div>
<svg class="a" style="left:3690px;top:1490px;" width="140" height="140" viewBox="0 0 140 140"><circle cx="70.4" cy="67.8" r="56.5" fill="#ffffff"/><circle cx="70.4" cy="67.8" r="54.5" fill="none" stroke="#e2e2e2" stroke-width="4"/><line x1="72.4" y1="73.6" x2="49.48" y2="43.14" stroke="#c23b36" stroke-width="2.58"/><line x1="72.4" y1="73.6" x2="96.08" y2="55.17" stroke="#c23b36" stroke-width="2.58"/><line x1="72.4" y1="73.6" x2="72.88" y2="57.84" stroke="#c23b36" stroke-width="2.58"/><line x1="72.4" y1="73.6" x2="50.63" y2="82.19" stroke="#c23b36" stroke-width="2.58"/><line x1="72.4" y1="73.6" x2="89.49" y2="81.53" stroke="#c23b36" stroke-width="2.58"/><line x1="72.4" y1="73.6" x2="76.03" y2="94.61" stroke="#c23b36" stroke-width="2.58"/><circle cx="49.48" cy="43.14" r="7.35" fill="#c23b36"/><circle cx="96.08" cy="55.17" r="5.25" fill="#c23b36"/><circle cx="72.88" cy="57.84" r="4.68" fill="#c23b36"/><circle cx="50.63" cy="82.19" r="7.54" fill="#c23b36"/><circle cx="89.49" cy="81.53" r="4.30" fill="#c23b36"/><circle cx="76.03" cy="94.61" r="5.54" fill="#c23b36"/><circle cx="72.4" cy="73.6" r="5.92" fill="#ffffff" stroke="#c23b36" stroke-width="3.25"/></svg>
<div class="a" style="left:768px;top:1650px;width:3070px;height:85px;background:#161616;"></div>
<div class="a" style="left:767px;top:1649.5px;width:3071px;height:2px;background:#474747;"></div>
<div class="t" style="left:803.50px;top:1691.8px;font-size:31px;color:#f2f2f2;letter-spacing:-0.406px;-webkit-text-stroke:0.37px #f2f2f2;">1 - 21 of 21 Search Pattern Rules | 1 selected</div>
<svg class="a" style="left:2705px;top:1685px;" width="40" height="40" viewBox="0 0 40 40"><g fill="none" stroke="#8a8a8a" stroke-width="2.2"><polyline points="20,8.5 9.5,19.8 20,31"/><polyline points="31,8.5 20.5,19.8 31,31"/></g></svg>
<svg class="a" style="left:2772px;top:1685px;" width="30" height="40" viewBox="0 0 30 40"><polyline points="20,8.5 9.5,19.8 20,31" fill="none" stroke="#8a8a8a" stroke-width="2.2"/></svg>
<div class="t" style="left:2910.00px;top:1682.7px;font-size:31px;color:#c8c8c8;">1</div>
<div class="t" style="left:2987.70px;top:1686px;font-size:31px;color:#f2f2f2;letter-spacing:2.059px;-webkit-text-stroke:0.37px #f2f2f2;">of</div>
<div class="t" style="left:3035.00px;top:1686px;font-size:31px;color:#f2f2f2;-webkit-text-stroke:0.37px #f2f2f2;">1</div>
<svg class="a" style="left:3085px;top:1685px;" width="30" height="40" viewBox="0 0 30 40"><polyline points="10,8.5 20.5,19.8 10,31" fill="none" stroke="#8a8a8a" stroke-width="2.2"/></svg>
<svg class="a" style="left:3140px;top:1685px;" width="40" height="40" viewBox="0 0 40 40"><g fill="none" stroke="#8a8a8a" stroke-width="2.2"><polyline points="9,8.5 19.5,19.8 9,31"/><polyline points="20,8.5 30.5,19.8 20,31"/></g></svg>
<div class="a" style="left:3210px;top:1673px;width:151.5px;height:70px;border:2px solid #707070;"></div>
<div class="t" style="left:3220.60px;top:1691px;font-size:31px;color:#d0d0d0;letter-spacing:0.559px;">50</div>
<svg class="a" style="left:3315px;top:1695px;" width="30" height="28" viewBox="0 0 30 28"><polyline points="6.5,11 15.3,20 24.1,11" fill="none" stroke="#bdbdbd" stroke-width="1.8"/></svg>
<div class="t" style="left:3377.80px;top:1688.5px;font-size:31px;color:#f2f2f2;letter-spacing:-0.472px;-webkit-text-stroke:0.37px #f2f2f2;">Search Pattern Rules per page</div>
</body></html>
